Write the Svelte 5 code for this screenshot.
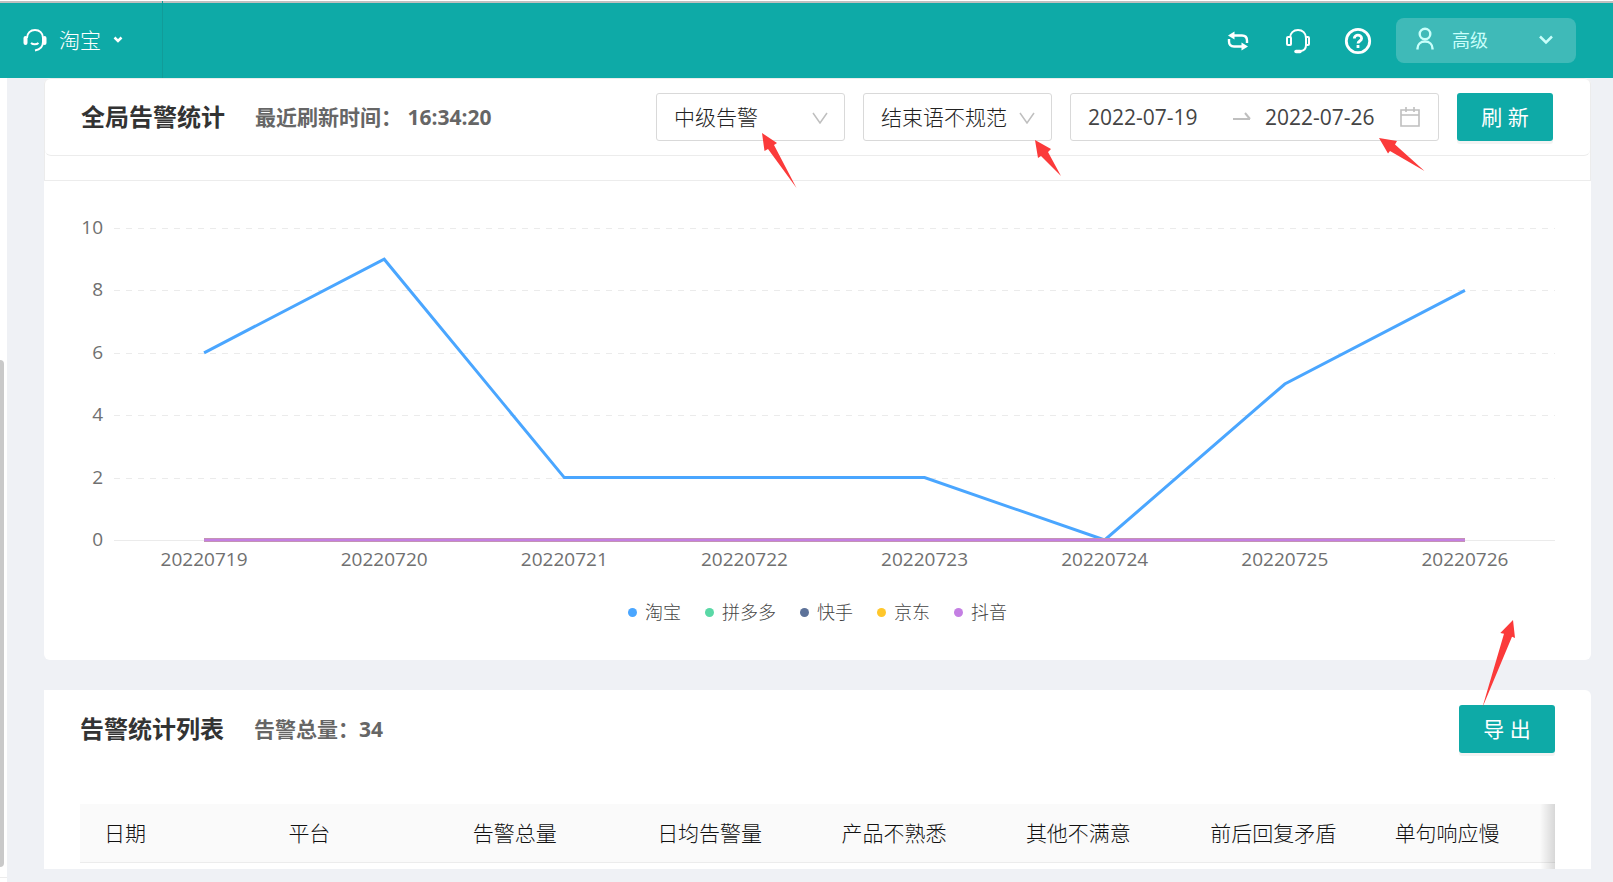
<script lang="ts">
	interface Series {
		name: string;
		color: string;
		values: number[];
	}

	const days = [
		'20220719',
		'20220720',
		'20220721',
		'20220722',
		'20220723',
		'20220724',
		'20220725',
		'20220726'
	];

	const zeros = days.map(() => 0);

	const series: Series[] = [
		{ name: '淘宝', color: '#4aa6ff', values: [6, 9, 2, 2, 2, 0, 5, 8] },
		{ name: '拼多多', color: '#5ad8a6', values: zeros },
		{ name: '快手', color: '#5d7299', values: zeros },
		{ name: '京东', color: '#ffc72b', values: zeros },
		{ name: '抖音', color: '#c47fe3', values: zeros }
	];

	const ticks = [0, 2, 4, 6, 8, 10];

	const columns = [
		'日期',
		'平台',
		'告警总量',
		'日均告警量',
		'产品不熟悉',
		'其他不满意',
		'前后回复矛盾',
		'单句响应慢'
	];

	const levels = ['低级告警', '中级告警', '高级告警'];
	const kinds = ['结束语不规范', '产品不熟悉', '其他不满意'];

	let level = $state('中级告警');
	let kind = $state('结束语不规范');
	let start = $state('2022-07-19');
	let end = $state('2022-07-26');

	// plot area: axis starts after the tick labels, one band per day
	const left = 34;
	const top = 11;
	const plotHeight = 312;
	let chartWidth = $state(1475);

	let band = $derived((chartWidth - left) / days.length);

	const y = (value: number) => top + plotHeight - (value / 10) * plotHeight;
	const x = (index: number) => left + band * (index + 0.5);
	const points = (values: number[]) => values.map((v, i) => `${x(i)},${y(v)}`).join(' ');
</script>

<div class="page">
	<header class="topbar">
		<button class="platform">
			<svg width="24" height="24" viewBox="0 0 24 24" fill="none" stroke="#fff" stroke-width="2">
				<path d="M4 10C4 5 7.500 2 12 2s8 3 8 8v4c0 4.500-3 7.500-8 8.500" />
				<path d="M8 15c2 1.800 5.500 1.800 7.500 0" />
				<path d="M2.500 10v5M21.500 10v5" stroke-width="4" stroke-linecap="round" />
			</svg>
			<span>淘宝</span>
			<svg width="10" height="8" viewBox="0 0 10 8" fill="none" stroke="#fff" stroke-width="2.500">
				<path d="M1.500 1.500L5 5l3.500-3.500" />
			</svg>
		</button>
		<nav class="tools">
			<button class="tool" aria-label="切换">
				<svg width="28" height="28" viewBox="0 0 28 28" fill="none" stroke="#fff" stroke-width="2.400">
					<path d="M7 8.500h11q5 0 5 5V16M21 19.500H10q-5 0-5-5V12" />
					<path d="M4 8.500l6.500-4v8zM24 19.500l-6.500-4v8z" fill="#fff" stroke="none" />
				</svg>
			</button>
			<button class="tool" aria-label="客服">
				<svg width="28" height="28" viewBox="0 0 28 28" fill="none" stroke="#fff" stroke-width="2">
					<path d="M6 11c0-5 3.500-8 8-8s8 3 8 8v7c0 4-2.500 6-6 6" />
					<rect x="3" y="10" width="4" height="8" rx="1" />
					<path d="M22 10h2q1 0 1 1v6q0 1-1 1h-2" />
					<path d="M12 24.500h4" stroke-width="3.500" stroke-linecap="round" />
				</svg>
			</button>
			<button class="tool" aria-label="帮助">
				<svg width="28" height="28" viewBox="0 0 28 28" fill="none" stroke="#fff" stroke-width="2.800">
					<circle cx="14" cy="14" r="11.700" />
					<path d="M10.300 11.500c0-4.500 7.300-4.500 7.300 0 0 2.500-3.600 2.500-3.600 5M14 18v3" />
				</svg>
			</button>
			<button class="account">
				<svg width="18" height="26" viewBox="0 0 18 26" fill="none" stroke="#c9fffb" stroke-width="2.400">
					<circle cx="9" cy="7" r="5.300" />
					<path d="M1.500 22.500v-1c0-4 3-7 7.500-7s7.500 3 7.500 7v1" />
				</svg>
				<span>高级</span>
				<svg class="caret" width="14" height="10" viewBox="0 0 14 10" fill="none" stroke="#c9fffb" stroke-width="2.500">
					<path d="M1 1.500l6 6 6-6" />
				</svg>
			</button>
		</nav>
	</header>

	<div class="body">
		<aside class="rail">
			<div class="thumb"></div>
			<div class="rail-foot"></div>
		</aside>

		<main>
			<section class="card">
				<div class="frame">
					<div class="filters">
						<h2>全局告警统计</h2>
						<p class="meta">最近刷新时间： <time>16:34:20</time></p>
						<div class="controls">
							<div class="select">
								<select aria-label="告警级别" bind:value={level}>
									{#each levels as item (item)}
										<option>{item}</option>
									{/each}
								</select>
								<svg class="chevron" width="16" height="12" viewBox="0 0 16 12" fill="none" stroke="#bfbfbf" stroke-width="1.500">
									<path d="M1 1l7 10 7-10" />
								</svg>
								<svg class="pointer level-pointer" width="36" height="56" viewBox="0 0 36 56">
									<path d="M0 0l15 10-3 2 22.500 43L6 16l-3.500 2z" />
								</svg>
							</div>
							<div class="select">
								<select aria-label="告警类型" bind:value={kind}>
									{#each kinds as item (item)}
										<option>{item}</option>
									{/each}
								</select>
								<svg class="chevron" width="16" height="12" viewBox="0 0 16 12" fill="none" stroke="#bfbfbf" stroke-width="1.500">
									<path d="M1 1l7 10 7-10" />
								</svg>
								<svg class="pointer kind-pointer" width="28" height="38" viewBox="0 0 28 38">
									<path d="M0 0l16 9-3 3 13 24L6 16l-3 2z" />
								</svg>
							</div>
							<div class="range">
								<input aria-label="开始日期" bind:value={start} />
								<svg width="18" height="10" viewBox="0 0 18 10" fill="none" stroke="#bfbfbf" stroke-width="2">
									<path d="M0 7h17M12 1l5 6" />
								</svg>
								<input aria-label="结束日期" bind:value={end} />
								<svg width="20" height="20" viewBox="0 0 20 20" fill="none" stroke="#bfbfbf" stroke-width="1.600">
									<path d="M1 3h18v16H1zM1 8h18M6 0v5M14 0v5" />
								</svg>
								<svg class="pointer range-pointer" width="48" height="36" viewBox="0 0 48 36">
									<path d="M0 0l18 3-2 3.500L45.500 33 11 13l-2 2.500z" />
								</svg>
							</div>
							<button class="primary">刷 新</button>
						</div>
					</div>
				</div>

				<div class="chart">
					<div class="plot" bind:clientWidth={chartWidth}>
						<svg width={chartWidth} height="360" role="img" aria-label="全局告警统计">
							{#each ticks as tick (tick)}
								<text class="tick" x="23" y={y(tick) + 6} text-anchor="end">{tick}</text>
								<line
									class="grid"
									class:axis={tick === 0}
									x1={left}
									x2={chartWidth}
									y1={Math.round(y(tick)) + 0.5}
									y2={Math.round(y(tick)) + 0.5}
								/>
							{/each}
							{#each days as day, i (day)}
								<text class="tick" x={x(i)} y={y(0) + 26} text-anchor="middle">{day}</text>
							{/each}
							{#each series as item (item.name)}
								<polyline points={points(item.values)} fill="none" stroke={item.color} stroke-width="3" />
							{/each}
							<line class="edge" x1={x(0)} x2={x(days.length - 1)} y1={y(0) - 1.5} y2={y(0) - 1.5} />
							<line class="edge" x1={x(0)} x2={x(days.length - 1)} y1={y(0) + 1.5} y2={y(0) + 1.5} />
						</svg>
					</div>
					<ul class="legend">
						{#each series as item (item.name)}
							<li><i class="dot" style="background: {item.color}"></i>{item.name}</li>
						{/each}
					</ul>
				</div>
			</section>

			<section class="card list">
				<div class="list-head">
					<h2>告警统计列表</h2>
					<p class="meta">告警总量：34</p>
					<div class="export">
						<button class="primary">导 出</button>
						<svg class="pointer export-pointer" width="34" height="88" viewBox="0 0 34 88">
							<path d="M31 0l2 18-3-1.300L.300 87.700 22 13.700 18.300 13z" />
						</svg>
					</div>
				</div>
				<div class="table-wrap">
					<table>
						<thead>
							<tr>
								{#each columns as column (column)}
									<th scope="col">{column}</th>
								{/each}
							</tr>
						</thead>
					</table>
				</div>
			</section>
		</main>
	</div>
</div>

<style>
	:global(body) {
		background: #eff1f5;
	}

	.page,
	.page * {
		box-sizing: border-box;
	}

	.page {
		min-height: 100vh;
		display: flex;
		flex-direction: column;
		overflow: hidden;
		font-family: 'Open Sans', 'Noto Sans CJK SC', sans-serif;
		font-size: 21px;
		line-height: 30px;
		color: #333;
	}

	button,
	select,
	input {
		font: inherit;
		color: inherit;
		margin: 0;
		padding: 0;
		border: 0;
		background: none;
	}

	button {
		cursor: pointer;
	}

	svg {
		display: block;
		flex: none;
	}

	h2,
	p {
		margin: 0;
	}

	.topbar {
		height: 78px;
		display: flex;
		justify-content: space-between;
		align-items: stretch;
		border-top: 1px solid #fff;
		box-shadow: inset 0 2px #c0c0c0;
		background: #0eaaa7;
		color: #fff;
	}

	.platform {
		width: 163px;
		display: flex;
		align-items: center;
		gap: 12px;
		padding: 0 0 0 23px;
		border-right: 1px solid #119c99;
		font-weight: 300;
	}

	.tools {
		display: flex;
		align-items: center;
		gap: 32px;
		padding: 2px 37px 0 0;
	}

	.account {
		width: 180px;
		height: 45px;
		display: flex;
		align-items: center;
		gap: 18px;
		margin-left: -8px;
		padding: 0 23px 2px 20px;
		border-radius: 8px;
		background: #3fbab8;
		color: #c9fffb;
		font-size: 18px;
	}

	.caret {
		margin-left: auto;
	}

	.body {
		flex: 1;
		display: flex;
	}

	.rail {
		width: 7px;
		display: grid;
		grid-template-rows: 282fr 507fr 15fr;
		background: #fff;
	}

	.thumb {
		grid-row: 2;
		width: 4px;
		border-radius: 0 4px 4px 0;
		background: #c9c9c9;
	}

	.rail-foot {
		grid-row: 3;
		height: 11px;
		border-bottom: 1px solid #ececec;
	}

	main {
		flex: 1;
		min-width: 0;
		display: flex;
		flex-direction: column;
		gap: 30px;
		padding: 0 22px 13px 37px;
	}

	.card {
		background: #fff;
		border-radius: 6px;
	}

	.frame {
		padding-bottom: 24px;
		border: 1px solid #ececec;
		border-top: 0;
		border-radius: 6px 6px 0 0;
	}

	.filters {
		display: flex;
		align-items: center;
		padding: 14px 37px 14px 36px;
		border-bottom: 1px solid #ececec;
		border-top: 1px solid #ececec;
		border-radius: 6px;
	}

	h2 {
		font-size: 24px;
		font-weight: 700;
		white-space: nowrap;
	}

	.meta {
		margin-left: 30px;
		font-weight: 700;
		color: #666;
		white-space: nowrap;
	}

	.controls {
		display: flex;
		gap: 18px;
		margin-left: auto;
	}

	.select,
	.range,
	.export {
		position: relative;
	}

	.select select {
		width: 189px;
		height: 48px;
		padding: 0 17px;
		border: 1px solid #d9d9d9;
		border-radius: 3px;
		appearance: none;
		background: #fff;
		font-weight: 300;
		color: #222;
	}

	.chevron {
		position: absolute;
		top: 19px;
		right: 17px;
		pointer-events: none;
	}

	.range {
		width: 369px;
		height: 48px;
		display: flex;
		align-items: center;
		gap: 14px;
		padding: 0 18px 0 17px;
		border: 1px solid #d9d9d9;
		border-radius: 3px;
	}

	.range input {
		flex: 1 1 130px;
		min-width: 0;
		color: #444;
	}

	.range input + svg + input {
		flex-basis: 120px;
	}

	.primary {
		width: 96px;
		height: 48px;
		border-radius: 3px;
		background: #0eaaa7;
		box-shadow: 0 3px 0 #f3f3f3;
		color: #fff;
	}

	.pointer {
		position: absolute;
		z-index: 1;
		fill: #fb3a3a;
		pointer-events: none;
	}

	.level-pointer {
		top: 40px;
		left: 106px;
	}

	.kind-pointer {
		top: 47px;
		left: 172px;
	}

	.range-pointer {
		top: 44px;
		left: 308px;
	}

	.export-pointer {
		right: 39px;
		bottom: 45px;
	}

	.chart {
		padding: 36px 36px 33px;
	}

	.plot svg {
		overflow: visible;
	}

	.tick {
		font-size: 19px;
		fill: #707070;
	}

	.grid {
		stroke: #ebebeb;
		stroke-width: 1;
		stroke-dasharray: 6 6;
	}

	.axis {
		stroke-dasharray: none;
	}

	.edge {
		stroke: #c493b4;
		stroke-width: 1;
	}

	.legend {
		display: flex;
		justify-content: center;
		gap: 24px;
		margin: 20px 0 0;
		padding: 0;
		list-style: none;
		font-size: 18px;
		font-weight: 300;
		color: #444;
	}

	.legend li {
		display: flex;
		align-items: center;
		gap: 8px;
	}

	.dot {
		width: 9px;
		height: 9px;
		border-radius: 50%;
	}

	.list {
		padding: 15px 36px 0;
		border-radius: 0 6px 0 0;
	}

	.list-head {
		display: flex;
		align-items: center;
		margin-bottom: 51px;
	}

	.export {
		margin-left: auto;
	}

	.table-wrap {
		position: relative;
		padding-bottom: 6px;
	}

	.table-wrap::after {
		content: '';
		position: absolute;
		inset: 0 0 0 auto;
		width: 15px;
		background: linear-gradient(to right, rgba(0, 0, 0, 0), rgba(0, 0, 0, 0.14));
	}

	table {
		width: 100%;
		table-layout: fixed;
		border-collapse: separate;
		border-spacing: 0;
	}

	th {
		height: 59px;
		padding: 0 24px;
		border-bottom: 1px solid #ececec;
		background: #fafafa;
		font-weight: 300;
		text-align: left;
		white-space: nowrap;
		color: #111;
	}
</style>
